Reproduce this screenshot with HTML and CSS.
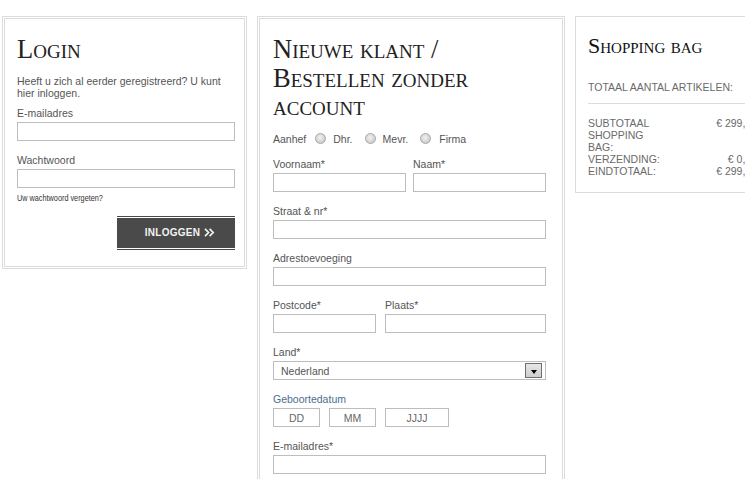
FILE: index.html
```html
<!DOCTYPE html>
<html lang="nl">
<head>
<meta charset="utf-8">
<title>Inloggen</title>
<link rel="stylesheet" href="styles.css">
</head>
<body>
<div class="page">
  <section class="panel login">
    <h2 class="title">Login</h2>
    <p class="intro">Heeft u zich al eerder geregistreerd? U kunt hier inloggen.</p>
    <div class="field">
      <label class="label">E-mailadres</label>
      <input class="input" type="text">
    </div>
    <div class="field field-last">
      <label class="label">Wachtwoord</label>
      <input class="input" type="password">
    </div>
    <div class="forgot-line"><a class="forgot">Uw wachtwoord vergeten?</a></div>
    <div class="actions">
      <button class="btn" type="button">INLOGGEN
        <svg class="chev" width="11" height="9" viewBox="0 0 11 9"><path d="M1 0.8 L4.6 4.5 L1 8.2 M5.6 0.8 L9.2 4.5 L5.6 8.2" fill="none" stroke="#f2f2f2" stroke-width="1.7"/></svg>
      </button>
    </div>
  </section>

  <section class="panel register">
    <h2 class="title">Nieuwe klant /<br>Bestellen zonder account</h2>
    <div class="salutation">
      <span>Aanhef</span>
      <span class="radio"></span><span class="opt">Dhr.</span>
      <span class="radio"></span><span class="opt">Mevr.</span>
      <span class="radio"></span><span class="opt">Firma</span>
    </div>
    <div class="row two">
      <div class="field"><label class="label">Voornaam*</label><input class="input" type="text"></div>
      <div class="field"><label class="label">Naam*</label><input class="input" type="text"></div>
    </div>
    <div class="field"><label class="label">Straat &amp; nr*</label><input class="input" type="text"></div>
    <div class="field"><label class="label">Adrestoevoeging</label><input class="input" type="text"></div>
    <div class="row zip">
      <div class="field"><label class="label">Postcode*</label><input class="input" type="text"></div>
      <div class="field"><label class="label">Plaats*</label><input class="input" type="text"></div>
    </div>
    <div class="field">
      <label class="label">Land*</label>
      <div class="select"><span>Nederland</span><span class="arrow"></span></div>
    </div>
    <div class="field">
      <label class="label label-blue">Geboortedatum</label>
      <div class="dates">
        <input class="input date dd" type="text" placeholder="DD">
        <input class="input date mm" type="text" placeholder="MM">
        <input class="input date yy" type="text" placeholder="JJJJ">
      </div>
    </div>
    <div class="field"><label class="label">E-mailadres*</label><input class="input" type="text"></div>
  </section>

  <section class="bag">
    <h2 class="bag-title">Shopping bag</h2>
    <div class="count">TOTAAL AANTAL ARTIKELEN:</div>
    <div class="totals">
      <span>SUBTOTAAL SHOPPING BAG:</span><span class="val">€ 299,00</span>
      <span>VERZENDING:</span><span class="val">€ 0,00</span>
      <span>EINDTOTAAL:</span><span class="val">€ 299,00</span>
    </div>
  </section>
</div>
</body>
</html>
```
FILE: styles.css
```css
html, body {
  margin: 0;
  padding: 0;
  background: #fff;
  overflow: hidden;
}
body {
  font-family: "Liberation Sans", Arial, sans-serif;
  font-size: 10.5px;
  color: #555;
}
.page {
  display: flex;
  align-items: flex-start;
  gap: 10px;
  padding: 16px 0 0 2px;
  width: max-content;
}
.panel {
  border: 3px double #dcdcdc;
  box-sizing: border-box;
}
.login {
  width: 245px;
  padding: 16px 9px 18px 12px;
}
.register {
  width: 308px;
  padding: 16px 16px 30px 13px;
}
.title {
  margin: 0;
  font-family: "Liberation Serif", "Times New Roman", serif;
  font-variant: small-caps;
  font-weight: normal;
  font-size: 26.5px;
  line-height: 28.5px;
  color: #222;
}
.intro {
  margin: 11.5px 0 8px;
  line-height: 12px;
}
.field {
  margin-bottom: 13px;
}
.field-last {
  margin-bottom: 0;
}
.label {
  display: block;
  line-height: 13px;
  margin-bottom: 2px;
  color: #555;
}
.label-blue {
  color: #4c6e8e;
}
.input {
  display: block;
  box-sizing: border-box;
  width: 100%;
  height: 19px;
  margin: 0;
  padding: 0 6px;
  border: 1px solid #bdbdbd;
  border-radius: 0;
  background: #fff;
  font: inherit;
  color: #555;
  outline: none;
}
.forgot-line {
  margin-top: 2.5px;
  height: 10px;
}
.forgot {
  display: inline-block;
  font-size: 9px;
  line-height: 10px;
  color: #333;
  transform: scaleX(0.81);
  transform-origin: 0 50%;
  white-space: nowrap;
}
.actions {
  display: flex;
  justify-content: flex-end;
  margin-top: 17px;
}
.btn {
  display: flex;
  align-items: center;
  justify-content: center;
  gap: 4px;
  width: 118px;
  height: 30px;
  margin: 0;
  padding: 0 0 0 8px;
  border: 0;
  background: #4a4a4a;
  color: #f2f2f2;
  font-family: "Liberation Sans", Arial, sans-serif;
  font-weight: bold;
  font-size: 10px;
  letter-spacing: 0.3px;
  box-shadow: 0 -1px 0 #fff, 0 -2px 0 #4a4a4a, 0 1px 0 #fff, 0 2px 0 #4a4a4a;
}
.chev {
  display: block;
}
.salutation {
  display: flex;
  align-items: center;
  height: 13px;
  margin: 11.5px 0 13px;
}
.radio {
  width: 11px;
  height: 11px;
  box-sizing: border-box;
  border: 1px solid #a8a8a8;
  border-radius: 50%;
  background: radial-gradient(circle at 45% 40%, #f2f2f2 0, #d6d6d6 55%, #bdbdbd 100%);
  margin: 0 7px 0 9px;
}
.opt + .radio {
  margin-left: 12px;
}
.opt:last-child {
  margin-left: 1px;
}
.row {
  display: flex;
}
.row .field {
  flex: none;
}
.two {
  gap: 7px;
}
.two .field {
  width: 133px;
}
.zip {
  gap: 9px;
}
.zip .field:first-child {
  width: 103px;
}
.zip .field:last-child {
  width: 161px;
}
.select {
  display: flex;
  align-items: flex-start;
  justify-content: space-between;
  box-sizing: border-box;
  height: 19px;
  border: 1px solid #bdbdbd;
  padding: 1px 3px 0 7px;
  line-height: 16px;
  color: #555;
}
.arrow {
  width: 17px;
  height: 15px;
  box-sizing: border-box;
  border: 1px solid #6f6f6f;
  background: linear-gradient(#e6e6e6, #cfcfcf);
  display: flex;
  align-items: center;
  justify-content: center;
  padding-top: 3px;
}
.arrow::before {
  content: "";
  border-left: 3.5px solid transparent;
  border-right: 3.5px solid transparent;
  border-top: 4px solid #000;
}
.dates {
  display: flex;
  gap: 9px;
}
.date {
  text-align: center;
  padding: 0;
}
.date::placeholder {
  color: #666;
  opacity: 1;
}
.dd, .mm {
  width: 47px;
}
.yy {
  width: 64px;
}
.bag {
  width: 195px;
  box-sizing: border-box;
  border: 1px solid #dcdcdc;
  padding: 17px 12px 15px 12px;
  color: #6a6a6a;
}
.bag-title {
  margin: 0;
  font-family: "Liberation Serif", "Times New Roman", serif;
  font-variant: small-caps;
  font-weight: normal;
  font-size: 22px;
  line-height: 24px;
  color: #111;
}
.count {
  margin-top: 23px;
  line-height: 12px;
  padding-bottom: 10px;
  border-bottom: 1px solid #dcdcdc;
}
.totals {
  display: grid;
  grid-template-columns: 76px 1fr;
  margin-top: 13px;
  line-height: 12px;
}
.val {
  text-align: right;
}
```
